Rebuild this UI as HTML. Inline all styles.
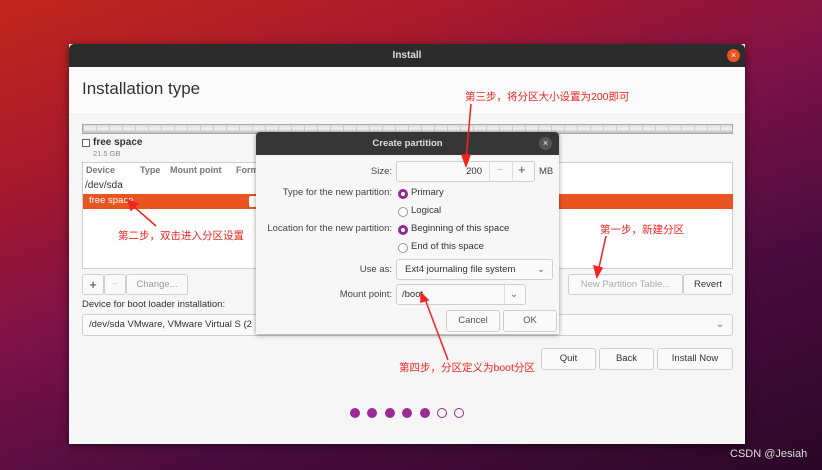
<!DOCTYPE html>
<html><head><meta charset="utf-8"><style>
*{box-sizing:border-box;margin:0;padding:0}
body{width:822px;height:470px;overflow:hidden;position:relative;font-family:"Liberation Sans","Noto Sans CJK SC",sans-serif;font-size:10px;color:#333;
background:linear-gradient(160deg,#c2271c 0%,#a5182e 25%,#7e1247 45%,#4a0c3e 70%,#2a0826 100%)}
.a{position:absolute}
.win{left:69px;top:44px;width:676px;height:400px;background:#f6f6f6;box-shadow:0 2px 8px rgba(0,0,0,.5)}
.tb{left:0;top:0;width:676px;height:23px;background:#2c2c2c;border-radius:5px 5px 0 0;color:#ddd;font-weight:bold;text-align:center;line-height:23px;font-size:10px}
.btn{position:absolute;border:1px solid #cfcfcf;background:#fafafa;border-radius:3px;text-align:center;font-size:9.5px;color:#333}
.red{color:#f3241f;font-size:10.5px;position:absolute;white-space:nowrap}
.radio{position:absolute;width:10px;height:10px;border-radius:50%;border:1px solid #999;background:#fff}
.radio.on{border:3px solid #92278f;background:#fff}
.dot{position:absolute;width:10px;height:10px;border-radius:50%;background:#9a2c93;top:408px}
.dot.o{background:none;border:1px solid #9a2c93}
</style></head><body>
<div class="a win">
 <div class="a tb">Install</div>
 <div class="a" style="right:5px;top:5px;width:13px;height:13px;border-radius:50%;background:#e95420;color:#fff;font-size:9px;text-align:center;line-height:13px">×</div>
 <div class="a" style="left:0;top:23px;width:676px;height:48px;background:#fbfbfb;border-bottom:1px solid #eee"></div>
 <div class="a" style="left:13px;top:35px;font-size:17px;color:#333">Installation type</div>
</div>
<div class="a" style="left:82px;top:124px;width:651px;height:10px;background:repeating-linear-gradient(90deg,#ccc 0,#ccc 1px,transparent 1px,transparent 13px),linear-gradient(#ddd,#f3f3f3,#bbb);border:1px solid #aaa"></div>
<div class="a" style="left:82px;top:139px;width:8px;height:8px;border:1px solid #666;background:#fff"></div>
<div class="a" style="left:93px;top:137px;font-weight:bold;font-size:10px">free space</div>
<div class="a" style="left:93px;top:149px;font-size:7.5px;color:#888">21.5 GB</div>
<div class="a" style="left:82px;top:162px;width:651px;height:107px;border:1px solid #ccc;background:#fff"></div>
<div class="a" style="left:86px;top:165px;color:#777;font-weight:bold;font-size:9px">Device</div>
<div class="a" style="left:140px;top:165px;color:#777;font-weight:bold;font-size:9px">Type</div>
<div class="a" style="left:170px;top:165px;color:#777;font-weight:bold;font-size:9px">Mount point</div>
<div class="a" style="left:236px;top:165px;color:#777;font-weight:bold;font-size:9px">Form</div>
<div class="a" style="left:85px;top:180px;font-size:10px">/dev/sda</div>
<div class="a" style="left:83px;top:194px;width:650px;height:15px;background:#e95420"></div>
<div class="a" style="left:89px;top:195px;color:#fff;font-size:9.5px">free space</div>
<div class="a" style="left:249px;top:196px;width:8px;height:11px;background:#fff;border-radius:2px"></div>
<div class="btn" style="left:82px;top:274px;width:22px;height:21px;line-height:19px;font-size:13px">+</div>
<div class="btn" style="left:104px;top:274px;width:22px;height:21px;line-height:19px;color:#bbb">−</div>
<div class="btn" style="left:126px;top:274px;width:62px;height:21px;line-height:19px;color:#999">Change...</div>
<div class="btn" style="left:568px;top:274px;width:115px;height:21px;line-height:19px;color:#aaa">New Partition Table...</div>
<div class="btn" style="left:683px;top:274px;width:50px;height:21px;line-height:19px">Revert</div>
<div class="a" style="left:82px;top:299px;font-size:9.5px">Device for boot loader installation:</div>
<div class="btn" style="left:82px;top:314px;width:651px;height:22px;line-height:20px;text-align:left;padding-left:6px">/dev/sda VMware, VMware Virtual S (2<span style="position:absolute;right:8px;color:#666">⌄</span></div>
<div class="btn" style="left:541px;top:348px;width:55px;height:22px;line-height:20px">Quit</div>
<div class="btn" style="left:599px;top:348px;width:55px;height:22px;line-height:20px">Back</div>
<div class="btn" style="left:657px;top:348px;width:76px;height:22px;line-height:20px">Install Now</div>
<div class="dot" style="left:350px"></div><div class="dot" style="left:367px"></div><div class="dot" style="left:385px"></div><div class="dot" style="left:402px"></div><div class="dot" style="left:420px"></div><div class="dot o" style="left:437px"></div><div class="dot o" style="left:454px"></div>

<div class="a" style="left:256px;top:132px;width:303px;height:202px;background:#f7f7f7;box-shadow:0 1px 5px rgba(0,0,0,.4);border-radius:4px 4px 0 0"></div>
<div class="a" style="left:256px;top:132px;width:303px;height:23px;background:#363636;border-radius:4px 4px 0 0;color:#ddd;font-weight:bold;text-align:center;line-height:23px;font-size:9.5px">Create partition</div>
<div class="a" style="left:539px;top:137px;width:13px;height:13px;border-radius:50%;background:#555;color:#eee;text-align:center;line-height:13px;font-size:9px">×</div>
<div class="a" style="left:256px;top:166px;width:136px;text-align:right;font-size:9.5px;color:#444">Size:</div>
<div class="btn" style="left:396px;top:161px;width:139px;height:21px"></div>
<div class="a" style="left:396px;top:166px;width:86px;text-align:right;font-size:9.5px">200</div>
<div class="a" style="left:489px;top:161px;width:1px;height:21px;background:#ddd"></div>
<div class="a" style="left:512px;top:161px;width:1px;height:21px;background:#ddd"></div>
<div class="a" style="left:497px;top:164px;color:#bbb;font-size:11px">−</div>
<div class="a" style="left:518px;top:162px;color:#555;font-size:13px">+</div>
<div class="a" style="left:539px;top:166px;font-size:9.5px;color:#444">MB</div>
<div class="a" style="left:256px;top:187px;width:136px;text-align:right;font-size:9.5px;color:#444">Type for the new partition:</div>
<div class="a" style="left:256px;top:223px;width:136px;text-align:right;font-size:9.5px;color:#444">Location for the new partition:</div>
<div class="radio on" style="left:398px;top:189px"></div><div class="a" style="left:411px;top:187px;font-size:9.5px">Primary</div>
<div class="radio" style="left:398px;top:207px"></div><div class="a" style="left:411px;top:205px;font-size:9.5px">Logical</div>
<div class="radio on" style="left:398px;top:225px"></div><div class="a" style="left:411px;top:223px;font-size:9.5px">Beginning of this space</div>
<div class="radio" style="left:398px;top:243px"></div><div class="a" style="left:411px;top:241px;font-size:9.5px">End of this space</div>
<div class="a" style="left:256px;top:264px;width:136px;text-align:right;font-size:9.5px;color:#444">Use as:</div>
<div class="btn" style="left:396px;top:259px;width:157px;height:21px;line-height:19px;text-align:left;padding-left:8px">Ext4 journaling file system<span style="position:absolute;right:7px;color:#666">⌄</span></div>
<div class="a" style="left:256px;top:289px;width:136px;text-align:right;font-size:9.5px;color:#444">Mount point:</div>
<div class="btn" style="left:396px;top:284px;width:130px;height:21px;line-height:19px;text-align:left;padding-left:5px">/boot<span style="position:absolute;left:107px;top:0;width:1px;height:19px;background:#ddd"></span><span style="position:absolute;right:7px;color:#666">⌄</span></div>
<div class="btn" style="left:446px;top:310px;width:54px;height:22px;line-height:20px;color:#555">Cancel</div>
<div class="btn" style="left:503px;top:310px;width:54px;height:22px;line-height:20px;color:#555">OK</div>

<div class="red" style="left:465px;top:89px">第三步，将分区大小设置为200即可</div>
<div class="red" style="left:118px;top:228px">第二步，双击进入分区设置</div>
<div class="red" style="left:600px;top:222px">第一步，新建分区</div>
<div class="red" style="left:399px;top:360px">第四步，分区定义为boot分区</div>
<svg class="a" style="left:0;top:0" width="822" height="470"><g stroke="#f3241f" stroke-width="1.5" fill="#f3241f">
<line x1="471" y1="104" x2="466" y2="160"/><polygon points="462,155 470,155 466,166"/>
<line x1="156" y1="226" x2="132" y2="205"/><polygon points="128,200 138,204 131,210"/>
<line x1="606" y1="236" x2="598" y2="272"/><polygon points="594,266 602,268 597,277"/>
<line x1="448" y1="360" x2="425" y2="299"/><polygon points="421,293 428,300 421,302"/>
</g></svg>
<div class="a" style="left:730px;top:448px;color:#ddd;font-size:11px">CSDN @Jesiah</div>
</body></html>
